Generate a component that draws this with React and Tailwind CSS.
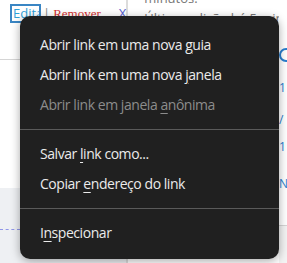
import React from "react";

const font = { fontFamily: '"Open Sans", "Noto Sans", sans-serif' };

function Item({ children, disabled }) {
  return (
    <div
      className={`h-[30px] flex items-center pl-[20px] text-[14px] tracking-[-0.45px] whitespace-pre ${disabled ? "text-[#8c8c8c]" : "text-[#ebebeb]"}`}
    >
      <span>{children}</span>
    </div>
  );
}

function Sep() {
  return <div className="mt-[10px] mb-[8px] h-px bg-[#5a5a5a]" />;
}

const U = ({ children }) => <u className="underline-offset-[3px]">{children}</u>;

export default function App() {
  return (
    <div className="relative w-[287px] h-[263px] overflow-hidden bg-white" style={font}>
      {/* background page */}
      <div className="flex h-full">
        <div className="w-[153px] flex flex-col">
          <div className="h-[60px] border-b border-[#d5d5d5] relative">
            <div className="flex items-center pl-[10px] pt-[4px] text-[13px]">
              <span className="w-[31px] h-[19px] overflow-hidden border-2 border-[#3a86c4] text-[#2fa0d8] pl-[1px] leading-[15px] whitespace-nowrap">Editar</span>
              <span className="ml-[2px] text-[#888]">|</span>
              <span className="ml-[3px] text-[#d23030]" style={{ fontFamily: '"Liberation Serif", serif' }}>Remover</span>
              <span className="ml-[18px] text-[#5560d0]">X</span>
            </div>
          </div>
          <div className="h-[128px]" />
          <div className="flex-1 bg-[#eef0f3] relative">
            <div className="mt-[41px] border-t border-dashed border-[#8f96e8] w-[20px]" />
          </div>
        </div>
        <div className="w-[15px] border-l border-r border-[#dcdcdc] bg-white" />
        <div className="flex-1 flex flex-col text-[13px] text-[#777] pl-[16px]">
          <div className="-mt-[10px] leading-[16px]">minutos.</div>
          <div className="leading-[16px] mt-[4px] whitespace-nowrap">Última edição há 5 minutos</div>
          <div className="flex-1" />
        </div>
      </div>
      <div className="absolute right-0 top-0 w-[8px] h-full bg-white flex flex-col text-[12px] text-[#2a7fd0] leading-none">
        <div className="mt-[48px] h-[14px] w-[14px] rounded-full border-2 border-[#2a7fd0]" />
        <div className="mt-[20px]">1</div>
        <div className="mt-[20px]">/</div>
        <div className="mt-[15px]">1</div>
        <div className="mt-[25px]">N</div>
        <div className="mt-[35px] flex-1 border-t border-[#d5d5d5] bg-[#f3f3f3]" />
      </div>

      {/* context menu */}
      <div className="absolute left-[20px] top-[16px] w-[259px] h-[243px] rounded-[10px] bg-[#202020] shadow-[0_2px_10px_rgba(0,0,0,0.35)] pt-[13px]">
        <Item>Abrir link em uma nova <U>g</U>uia</Item>
        <Item>Abrir link em uma nova <U>j</U>anela</Item>
        <Item disabled>Abrir link em janela <U>a</U>nônima</Item>
        <Sep />
        <Item>Salvar <U>l</U>ink como...</Item>
        <Item>Copiar <U>e</U>ndereço do link</Item>
        <Sep />
        <Item>I<U>n</U>specionar</Item>
      </div>
    </div>
  );
}
